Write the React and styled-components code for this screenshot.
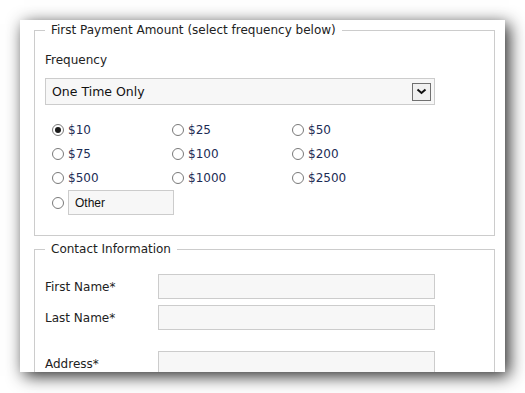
import React, { useState } from "react";
import styled, { createGlobalStyle } from "styled-components";

const GlobalStyle = createGlobalStyle`
  html, body {
    margin: 0;
    padding: 0;
    background: #ffffff;
  }
  body {
    font-family: "DejaVu Sans", Verdana, sans-serif;
    font-size: 12px;
    color: #222;
  }
`;

const amounts = ["$10", "$25", "$50", "$75", "$100", "$200", "$500", "$1000", "$2500"];

const Page = styled.div`
  padding: 20px 0 0 20px;
  height: 393px;
  box-sizing: border-box;
  overflow: hidden;
`;

const Panel = styled.div`
  width: 485px;
  height: 352px;
  box-sizing: border-box;
  background: #fff;
  padding: 2px 10px 0 14px;
  box-shadow: 4px 4px 16px rgba(0, 0, 0, 0.85);
  overflow: hidden;
`;

const Fieldset = styled.fieldset`
  margin: ${(p) => (p.$first ? "0" : "5px 0 0")};
  border: 1px solid #cccccc;
  padding: ${(p) => p.$pad};
  min-width: 0;

  legend {
    padding: 0 6px;
    margin-left: 0;
    line-height: 16px;
    font-size: 12px;
    color: #222;
  }
`;

const FieldLabel = styled.div`
  line-height: 16px;
  margin-bottom: 10px;
`;

const Select = styled.div`
  width: 390px;
  height: 27px;
  box-sizing: border-box;
  border: 1px solid #cccccc;
  background: #f7f7f7;
  display: flex;
  align-items: center;
  justify-content: space-between;
  padding: 0 3px 0 6px;
  font-size: 12.5px;
  color: #111;
`;

const ArrowBox = styled.span`
  width: 19px;
  height: 18px;
  box-sizing: border-box;
  border: 1px solid #707070;
  background: #f0f0f0;
  display: flex;
  align-items: center;
  justify-content: center;
`;

const AmountGrid = styled.div`
  margin-top: 13px;
  display: grid;
  grid-template-columns: 120px 120px 120px;
  grid-auto-rows: 24px;
  padding-left: 7px;
`;

const Choice = styled.label`
  display: flex;
  align-items: center;
  gap: 4px;
  color: #1c2c55;
  cursor: pointer;
`;

const Radio = styled.span`
  width: 12px;
  height: 12px;
  box-sizing: border-box;
  border-radius: 50%;
  border: 1px solid #7a7a7a;
  background: #fff;
  display: flex;
  align-items: center;
  justify-content: center;
  flex: none;

  &::after {
    content: "";
    width: 6px;
    height: 6px;
    border-radius: 50%;
    background: ${(p) => (p.$checked ? "#1a1a1a" : "transparent")};
  }
`;

const OtherRow = styled.div`
  height: 25px;
  display: flex;
  align-items: center;
  gap: 4px;
  padding-left: 7px;
`;

const OtherInput = styled.input`
  width: 106px;
  height: 25px;
  box-sizing: border-box;
  border: 1px solid #cccccc;
  background: #f7f7f7;
  padding: 0 6px;
  font-family: "Liberation Sans", Arial, sans-serif;
  font-size: 12px;
  color: #111;
  outline: none;
`;

const FormRow = styled.div`
  display: flex;
  align-items: center;
  margin-top: ${(p) => p.$gap || 0}px;
`;

const RowLabel = styled.div`
  width: 113px;
  flex: none;
`;

const TextInput = styled.input`
  width: 277px;
  height: 25px;
  box-sizing: border-box;
  border: 1px solid #cccccc;
  background: #f7f7f7;
  outline: none;
`;

const Chevron = () => (
  <svg width="11" height="7" viewBox="0 0 11 7">
    <path d="M1.5 1.5 L5.5 5 L9.5 1.5" fill="none" stroke="#111" strokeWidth="2" />
  </svg>
);

export default function App() {
  const [amount, setAmount] = useState("$10");

  return (
    <Page>
      <GlobalStyle />
      <Panel>
        <Fieldset $first $pad="14px 10px 20px 10px">
          <legend>First Payment Amount (select frequency below)</legend>
          <FieldLabel>Frequency</FieldLabel>
          <Select>
            <span>One Time Only</span>
            <ArrowBox>
              <Chevron />
            </ArrowBox>
          </Select>
          <AmountGrid>
            {amounts.map((a) => (
              <Choice key={a} onClick={() => setAmount(a)}>
                <Radio $checked={amount === a} />
                {a}
              </Choice>
            ))}
          </AmountGrid>
          <OtherRow>
            <Radio $checked={amount === "other"} onClick={() => setAmount("other")} />
            <OtherInput defaultValue="Other" />
          </OtherRow>
        </Fieldset>

        <Fieldset $pad="17px 10px 20px 10px">
          <legend>Contact Information</legend>
          <FormRow>
            <RowLabel>First Name*</RowLabel>
            <TextInput />
          </FormRow>
          <FormRow $gap={6}>
            <RowLabel>Last Name*</RowLabel>
            <TextInput />
          </FormRow>
          <FormRow $gap={21}>
            <RowLabel>Address*</RowLabel>
            <TextInput />
          </FormRow>
        </Fieldset>
      </Panel>
    </Page>
  );
}
